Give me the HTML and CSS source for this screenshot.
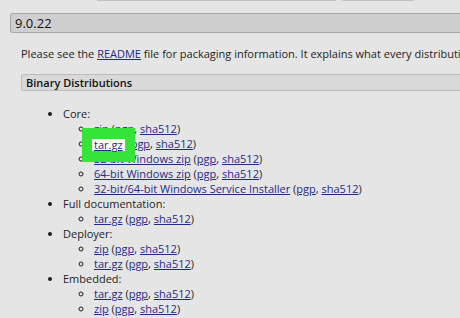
FILE: index.html
```html
<!DOCTYPE html>
<html lang="en">
<head>
    <meta charset="UTF-8">
    <title>Tomcat 9.0.22</title>
    <link rel="stylesheet" href="styles.css">
</head>
<body>
    <div class="top-edges">
        <span class="edge edge-wide"></span>
        <span class="edge edge-narrow"></span>
    </div>

    <h3 class="version">9.0.22</h3>

    <div class="content">
        <p class="intro">Please see the <a href="#">README</a> file for packaging information. It explains what every distribution contains.</p>

        <h4 class="section">Binary Distributions</h4>

        <ul class="dist">
            <li>Core:
                <ul>
                    <li><a href="#">zip</a> (<a href="#">pgp</a>, <a href="#">sha512</a>)</li>
                    <li><span class="mark"><a href="#">tar.gz</a></span> (<a href="#">pgp</a>, <a href="#">sha512</a>)</li>
                    <li><a href="#">32-bit Windows zip</a> (<a href="#">pgp</a>, <a href="#">sha512</a>)</li>
                    <li><a href="#">64-bit Windows zip</a> (<a href="#">pgp</a>, <a href="#">sha512</a>)</li>
                    <li><a href="#">32-bit/64-bit Windows Service Installer</a> (<a href="#">pgp</a>, <a href="#">sha512</a>)</li>
                </ul>
            </li>
            <li>Full documentation:
                <ul>
                    <li><a href="#">tar.gz</a> (<a href="#">pgp</a>, <a href="#">sha512</a>)</li>
                </ul>
            </li>
            <li>Deployer:
                <ul>
                    <li><a href="#">zip</a> (<a href="#">pgp</a>, <a href="#">sha512</a>)</li>
                    <li><a href="#">tar.gz</a> (<a href="#">pgp</a>, <a href="#">sha512</a>)</li>
                </ul>
            </li>
            <li>Embedded:
                <ul>
                    <li><a href="#">tar.gz</a> (<a href="#">pgp</a>, <a href="#">sha512</a>)</li>
                    <li><a href="#">zip</a> (<a href="#">pgp</a>, <a href="#">sha512</a>)</li>
                </ul>
            </li>
        </ul>
    </div>
</body>
</html>
```

FILE: styles.css
```css
body {
    margin: 0;
    background-color: #e5e5e5;
    font-family: "Open Sans", "Noto Sans", sans-serif;
    font-size: 11px;
    color: #1e1e1e;
    overflow: hidden;
}

a {
    color: #1f2a8c;
    text-decoration: underline;
}

.top-edges {
    display: flex;
    gap: 6px;
    margin-left: 97px;
    height: 1px;
}

.edge {
    display: block;
    height: 1px;
    background-color: #c2c2c2;
}

.edge-wide {
    width: 239px;
}

.edge-narrow {
    width: 72px;
}

.version {
    margin: 12px 0 0 10px;
    height: 18px;
    line-height: 18px;
    padding-left: 4px;
    border: 1px solid #a6a6a6;
    border-right: none;
    border-radius: 3px 0 0 3px;
    background-color: #cfcfcf;
    font-size: 13px;
    font-weight: normal;
    color: #111;
}

.content {
    padding-left: 21px;
}

.intro {
    margin: 13px 0 0;
    line-height: 15px;
    white-space: nowrap;
}

.section {
    margin: 13px 0 0;
    height: 15px;
    line-height: 15px;
    padding-left: 4px;
    border: 1px solid #bcbcbc;
    border-right: none;
    border-radius: 2px 0 0 2px;
    background-color: #d9d9d9;
    font-size: 11px;
    font-weight: 600;
    color: #111;
}

.dist {
    margin: 15px 0 0;
    padding-left: 42px;
    line-height: 15px;
    list-style: disc;
}

.dist ul {
    margin: 0;
    padding-left: 31px;
    list-style: circle;
}

.mark {
    position: relative;
    display: inline-block;
    padding: 0 2px;
    margin-left: -2px;
    height: 12px;
    line-height: 12px;
    vertical-align: -1px;
    background-color: #fff;
    box-shadow: 0 -1px 0 10px #35e339, 0 1px 0 10px #35e339;
}
```
